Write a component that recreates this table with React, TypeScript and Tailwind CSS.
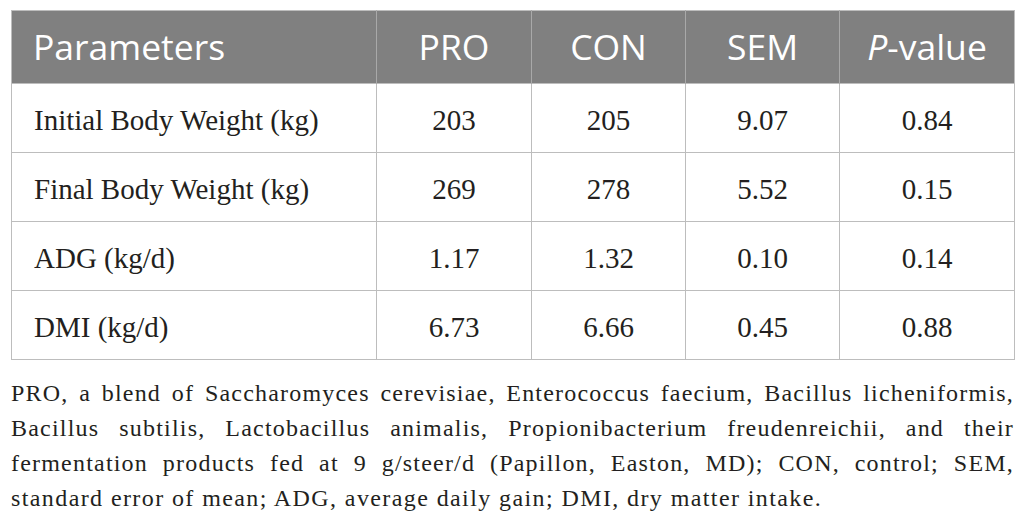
const headers = ["PRO", "CON", "SEM"];

const rows = [
  { label: "Initial Body Weight (kg)", values: ["203", "205", "9.07", "0.84"] },
  { label: "Final Body Weight (kg)", values: ["269", "278", "5.52", "0.15"] },
  { label: "ADG (kg/d)", values: ["1.17", "1.32", "0.10", "0.14"] },
  { label: "DMI (kg/d)", values: ["6.73", "6.66", "0.45", "0.88"] },
];

const footnote = [
  "PRO, a blend of Saccharomyces cerevisiae, Enterococcus faecium, Bacillus licheniformis,",
  "Bacillus subtilis, Lactobacillus animalis, Propionibacterium freudenreichii, and their",
  "fermentation products fed at 9 g/steer/d (Papillon, Easton, MD); CON, control; SEM,",
];

export default function App() {
  return (
    <div className="h-[520px] w-[1025px] overflow-hidden bg-white pl-[11px] pt-[10px]">
      <table className="w-[1003px] table-fixed border-collapse border border-[#bdbdbd]">
        <colgroup>
          <col className="w-[365px]" />
          <col className="w-[155px]" />
          <col className="w-[154px]" />
          <col className="w-[154px]" />
          <col className="w-[175px]" />
        </colgroup>
        <thead>
          <tr className="h-[73px] bg-[#808080] font-['Open_Sans',sans-serif] text-[35.5px] text-white">
            <th className="border-r border-[#a9a9a9] pl-[21px] text-left font-normal">Parameters</th>
            {headers.map((h) => (
              <th key={h} className="border-r border-[#a9a9a9] text-center font-normal">
                {h}
              </th>
            ))}
            <th className="text-center font-normal">
              <i>P</i>-value
            </th>
          </tr>
        </thead>
        <tbody className="font-['Liberation_Serif',serif] text-[29px] text-[#231f20]">
          {rows.map((r) => (
            <tr key={r.label} className="h-[69px] border-t border-[#bdbdbd]">
              <td className="border-r border-[#bdbdbd] pl-[22px] pt-[5px]">{r.label}</td>
              {r.values.map((v, i) => (
                <td key={i} className="border-r border-[#bdbdbd] pt-[5px] text-center">
                  {v}
                </td>
              ))}
            </tr>
          ))}
        </tbody>
      </table>

      {/* footnote, justified line by line */}
      <div className="mt-[16px] w-[1003px] font-['Liberation_Serif',serif] text-[24px] leading-[35px] tracking-[1.2px] text-[#231f20]">
        {footnote.map((line) => (
          <p key={line} className="whitespace-nowrap text-justify [text-align-last:justify]">
            {line}
          </p>
        ))}
        <p className="whitespace-nowrap tracking-[1.4px]">
          standard error of mean; ADG, average daily gain; DMI, dry matter intake.
        </p>
      </div>
    </div>
  );
}
